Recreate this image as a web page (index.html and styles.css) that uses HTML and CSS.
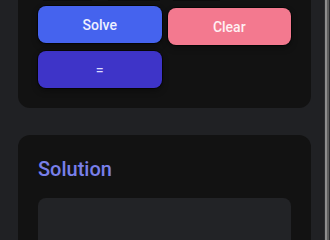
FILE: index.html
```html
<!DOCTYPE html>
<html lang="en">
<head>
<meta charset="utf-8">
<title>Solver</title>
<link rel="stylesheet" href="styles.css">
</head>
<body>
<div class="page">
  <main class="content">
    <section class="card card-controls">
      <div class="inputs">
        <span class="field"></span>
        <span class="field"></span>
        <span class="field"></span>
      </div>
      <div class="actions">
        <button class="btn btn-solve">Solve</button>
        <button class="btn btn-clear">Clear</button>
        <button class="btn btn-equals">=</button>
      </div>
    </section>
    <section class="card card-solution">
      <h2 class="title">Solution</h2>
      <div class="output"></div>
    </section>
  </main>
  <div class="scrollbar"><div class="thumb"></div></div>
</div>
</body>
</html>
```
FILE: styles.css
```css
html, body {
  margin: 0;
  padding: 0;
  height: 100%;
  overflow: hidden;
  background: #202124;
  font-family: Roboto, "Liberation Sans", sans-serif;
}
.page {
  display: flex;
  height: 100%;
  overflow: hidden;
}
.content {
  flex: 1;
  padding: 0 13px 0 18px;
  overflow: hidden;
}
.card {
  background: #121212;
  border-radius: 12px;
  padding: 20px;
}
.card-controls {
  margin-top: -55px;
}
.inputs {
  display: flex;
  gap: 16px;
  padding-left: 5px;
  margin-bottom: 7px;
}
.field {
  display: block;
  height: 36px;
  background: #0c0c0c;
}
.field:nth-child(1) { width: 49px; }
.field:nth-child(2) { width: 52px; }
.field:nth-child(3) { width: 47px; margin-left: -3px; }
.actions {
  display: grid;
  grid-template-columns: 1fr 1fr;
  gap: 6px;
}
.btn {
  height: 37px;
  border: none;
  border-radius: 8px;
  font-family: Roboto, "Liberation Sans", sans-serif;
  font-size: 14px;
  font-weight: 500;
  color: #eef0ff;
  box-shadow: 0 0 0 1px rgba(0, 0, 0, 0.55), 0 3px 6px rgba(0, 0, 0, 0.35);
  padding: 0;
}
.btn-solve {
  background: #4563ee;
  transform: translateY(-2px);
}
.btn-clear {
  background: #f3798f;
  color: #fff0f3;
}
.btn-equals {
  background: #3e34c8;
  color: #dcdcff;
}
.card-solution {
  margin-top: 27px;
  padding-top: 22px;
  height: 200px;
}
.title {
  margin: 0 0 17px;
  font-size: 20px;
  line-height: 24px;
  font-weight: 500;
  color: #787fe9;
}
.output {
  height: 100px;
  background: #222326;
  border-radius: 8px;
}
.scrollbar {
  width: 5px;
  display: flex;
  background: #2c2d30;
  padding-left: 1px;
}
.thumb {
  width: 2px;
  background: #8e8e8e;
  border-right: 2px solid #5e5e5e;
}
```
